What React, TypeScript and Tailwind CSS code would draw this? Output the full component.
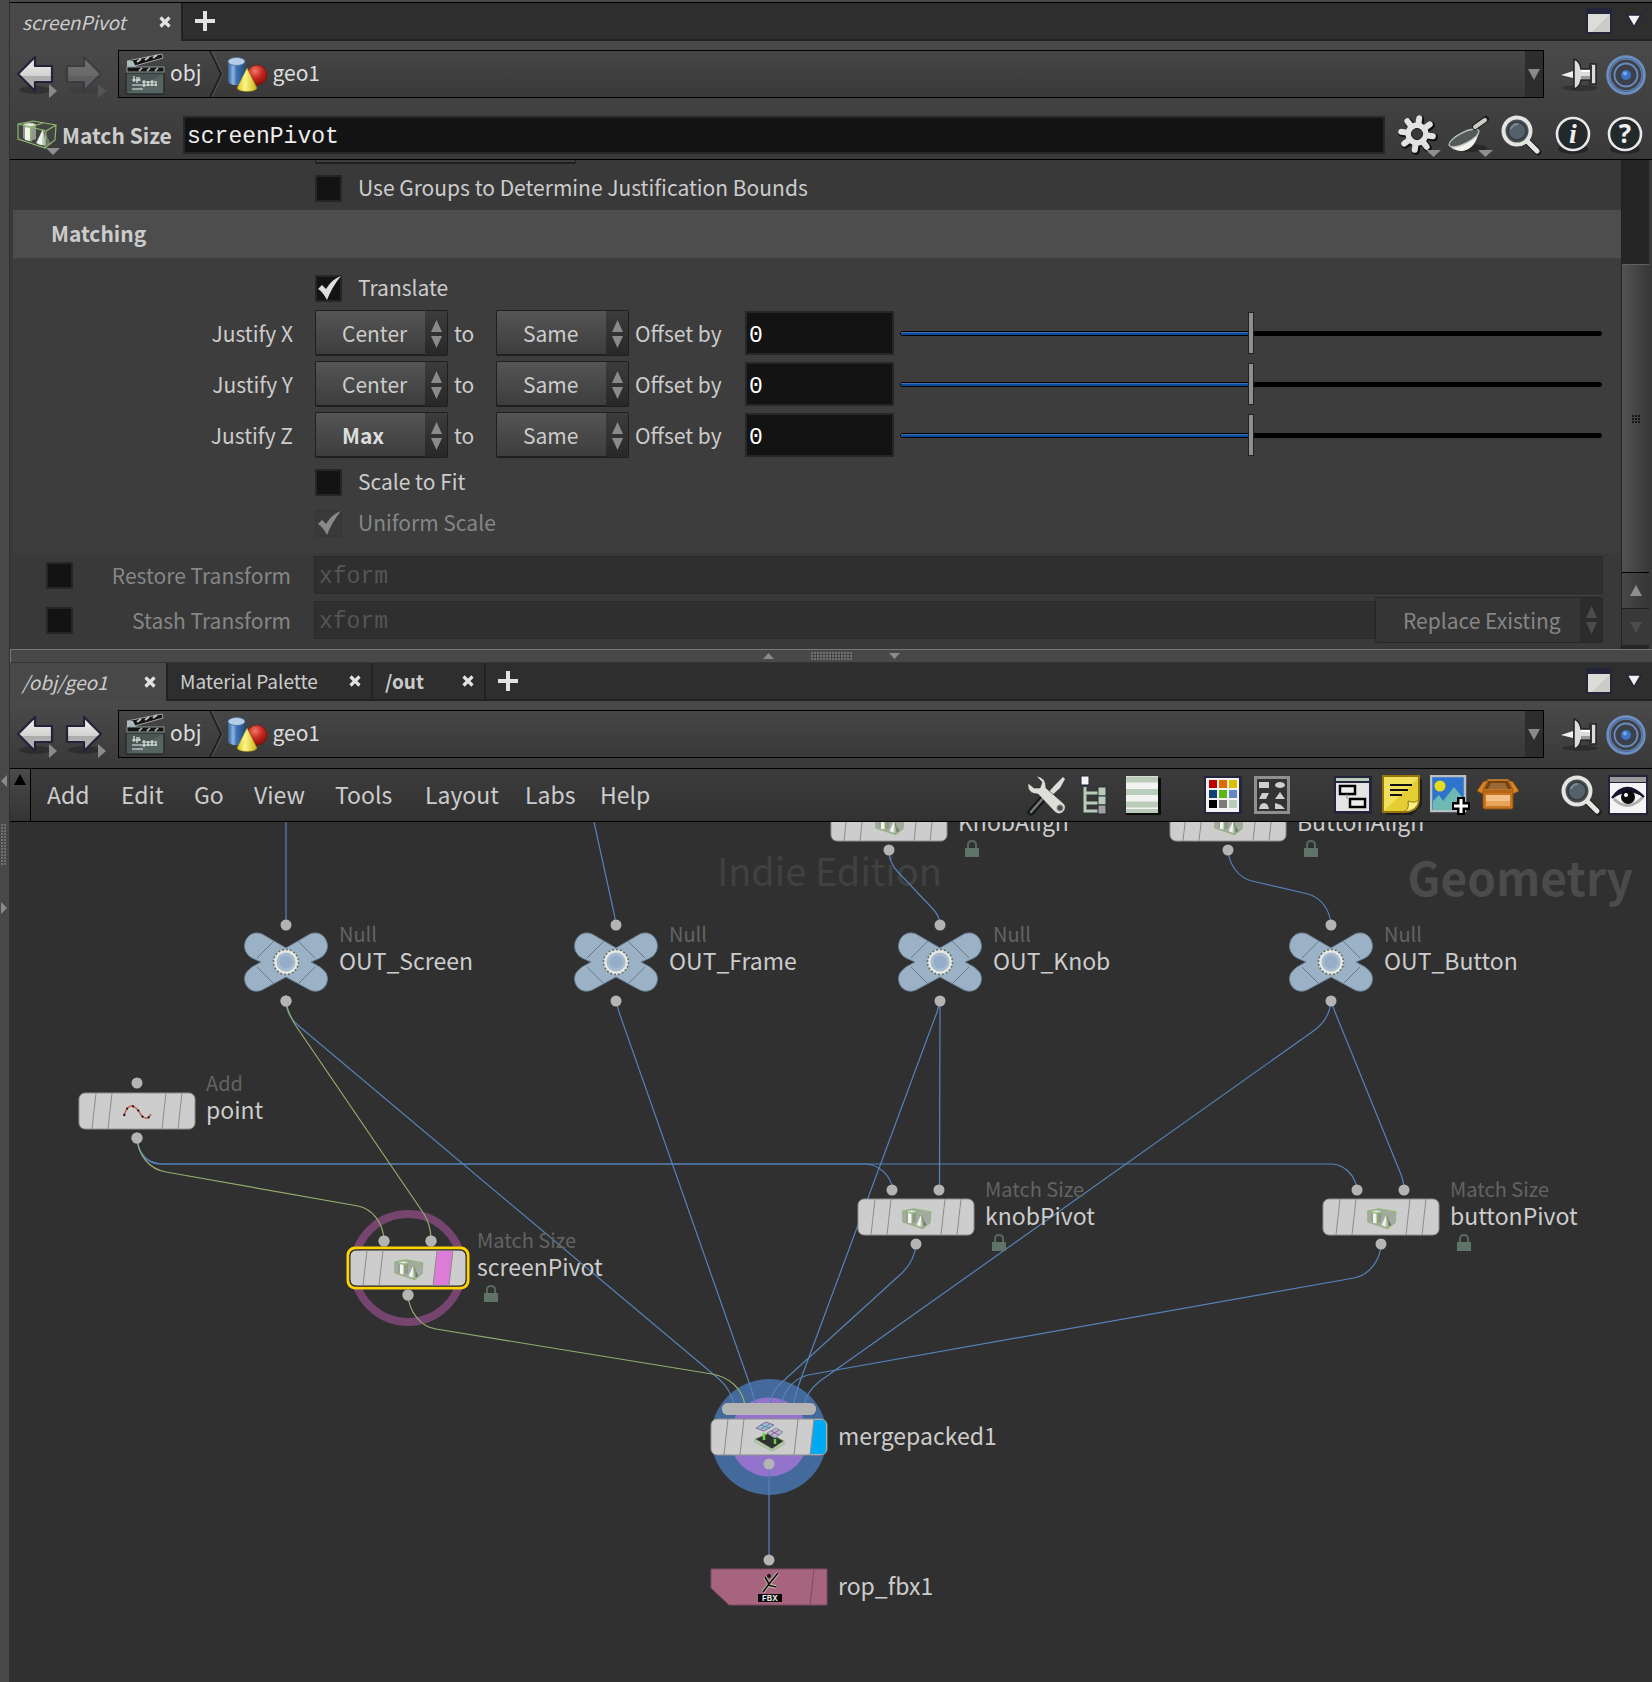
import { useState, type ReactNode } from 'react';

type Point = { x: number; y: number };

function ArrowIcon({ flip = false, dim = false }: { flip?: boolean; dim?: boolean }) {
  return (
    <svg width="42" height="46" viewBox="0 0 42 46" className={dim ? 'opacity-25' : ''}>
      <defs>
        <linearGradient id="arrowFill" x1="0" y1="0" x2="0" y2="1">
          <stop offset="0" stopColor="#f4f4f4" />
          <stop offset="0.55" stopColor="#d2d2d0" />
          <stop offset="0.56" stopColor="#acacac" />
          <stop offset="1" stopColor="#b8b8b8" />
        </linearGradient>
      </defs>
      <ellipse cx="19" cy="37" rx="16" ry="4" fill="#000" opacity="0.25" />
      <path
        d={flip ? 'M36 21 L19 4 V13 H2 V29 H19 V38 Z' : 'M2 21 L19 4 V13 H36 V29 H19 V38 Z'}
        fill="url(#arrowFill)"
        stroke="#22223a"
        strokeWidth="2.200"
        strokeLinejoin="round"
      />
      <path d="M33 31 L41 38 L33 45 Z" fill="#8a8a8a" />
    </svg>
  );
}

function ClapperIcon() {
  return (
    <svg width="40" height="42" viewBox="0 0 40 42">
      <rect x="1" y="20" width="38" height="21" rx="1" fill="#4a5654" stroke="#1a2020" />
      <path d="M3 40 L36 22 H38 V40 Z" fill="#5f6f6a" opacity="0.6" />
      <path d="M2 8 L37 1 L38 5 L6 14 Z" fill="#151515" stroke="#a5a5a5" />
      <path d="M12 9 L16 6 M20 7 L24 4 M28 5 L32 2" stroke="#ccc" strokeWidth="1.600" />
      <path d="M2 8 L8 8 L13 18 H2 Z" fill="#aebcc2" />
      <rect x="2" y="14" width="37" height="5" fill="#151515" stroke="#8d9a97" />
      <path d="M14 18 L17 15 M22 18 L25 15 M30 18 L33 15" stroke="#bbb" strokeWidth="1.600" />
      <path d="M7 27 H16 M9 23 V29 M12 24 V30 M14 24 V28 M7 32 H32 M17 29 H30 M19 27 V34 M23 28 V33 M27 27 V33 M31 28 V33 M7 36 H18" stroke="#e6ecea" strokeWidth="1.2" fill="none" />
    </svg>
  );
}

function GeoIcon() {
  return (
    <svg width="41" height="35" viewBox="0 0 41 35">
      <defs>
        <linearGradient id="cyl" x1="0" x2="1">
          <stop offset="0" stopColor="#2e5f9a" />
          <stop offset="0.3" stopColor="#8fb5e2" />
          <stop offset="0.5" stopColor="#3f74b4" />
          <stop offset="1" stopColor="#244c80" />
        </linearGradient>
        <radialGradient id="ball" cx="0.4" cy="0.3" r="0.7">
          <stop offset="0" stopColor="#ef7a6a" />
          <stop offset="0.5" stopColor="#c92a22" />
          <stop offset="1" stopColor="#8c100c" />
        </radialGradient>
        <linearGradient id="cone" x1="0" x2="1">
          <stop offset="0" stopColor="#d8c21c" />
          <stop offset="0.4" stopColor="#fdf58a" />
          <stop offset="1" stopColor="#c9b012" />
        </linearGradient>
      </defs>
      <path d="M1 4 V24 A8 4 0 0 0 18 24 V4 Z" fill="url(#cyl)" />
      <ellipse cx="9.500" cy="4.500" rx="8.500" ry="4" fill="#b6cde6" stroke="#45719f" strokeWidth="0.8" />
      <circle cx="30" cy="18" r="10" fill="url(#ball)" stroke="#6e1210" strokeWidth="0.6" />
      <path d="M20 11 L30 31 A10 3.500 0 0 1 10 31 Z" fill="url(#cone)" stroke="#8d7d14" strokeWidth="0.5" />
    </svg>
  );
}

function MatchSizeArt() {
  return (
    <g>
      <path d="M1 4 L16 1 L39 6 L38 20 L28 28 L1 19 Z" fill="#4c5548" opacity="0.3" />
      <path d="M6 5 V18 Q12 23 19 19 V5 Z" fill="#8f998a" />
      <path d="M8 6 V20 L13 21 V6 Z" fill="#f0f4ec" />
      <ellipse cx="12.500" cy="5" rx="6.500" ry="2.200" fill="#dfe6da" stroke="#7b8676" strokeWidth="0.600" />
      <path d="M26 9 L33 23 Q27 28 19 23 Z" fill="#bcc5b7" />
      <path d="M26 9 L25 25 L20 23 Z" fill="#f1f4ee" />
      <path d="M26 9 L33 23 L29 25 Z" fill="#6d7669" />
      <path d="M1 4 L16 1 L39 5 L38 20 L28 28 L1 19 Z M1 4 L14 7 L29 11 L39 5 M29 11 L28 28 M14 7 V22 M14 7 L26 3" fill="none" stroke="#8db56d" strokeWidth="1.200" />
    </g>
  );
}

function PinIcon() {
  return (
    <svg width="40" height="34" viewBox="0 0 40 34">
      <ellipse cx="20" cy="30" rx="18" ry="3" fill="#000" opacity="0.25" />
      <path d="M1 17 L13 13 V20 Z" fill="#f0f0f0" />
      <path d="M14 1 Q20 3 21 11 H30 V6 H36 V26 H30 V22 H21 Q20 29 14 31 Z" fill="#dcdcdc" stroke="#222" strokeWidth="1.500" />
      <path d="M21 12 H30 V14 H21 Z" fill="#fff" />
      <path d="M31 7 V25" stroke="#333" strokeWidth="2" />
      <path d="M21 18 H30 V21 H21 Z" fill="#999" />
    </svg>
  );
}

function TargetIcon() {
  return (
    <svg width="42" height="42" viewBox="0 0 42 42">
      <circle cx="21" cy="21" r="17.500" fill="#3f4145" stroke="#6d8fc0" strokeWidth="4.500" />
      <circle cx="21" cy="21" r="16.500" fill="none" stroke="#4a6898" strokeWidth="1.200" />
      <circle cx="21" cy="21" r="11.500" fill="#3c4048" stroke="#6a8cbe" strokeWidth="1.800" />
      <circle cx="21" cy="21" r="5" fill="#3b74c4" />
      <circle cx="20" cy="19.500" r="2" fill="#7ba8e6" />
    </svg>
  );
}

function GearIcon() {
  return (
    <svg width="46" height="44" viewBox="0 0 46 44">
      <g transform="translate(21 21)">
        {[8, 53, 98, 143, 188, 233, 278, 323].map((a) => (
          <path key={a} d="M0 -8 V-16" stroke="#101010" strokeWidth="8" strokeLinecap="round" transform={`translate(1 1) rotate(${a})`} />
        ))}
        {[8, 53, 98, 143, 188, 233, 278, 323].map((a) => (
          <path key={a} d="M0 -8 V-16" stroke="#e2e2e0" strokeWidth="6" strokeLinecap="round" transform={`rotate(${a})`} />
        ))}
        <circle r="8.500" fill="none" stroke="#e2e2e0" strokeWidth="6" />
        <circle r="5.500" fill="#3a3a3a" stroke="#181818" />
      </g>
      <path d="M30 37 H45 L37.500 44 Z" fill="#8f8f8f" />
    </svg>
  );
}

function PanIcon() {
  return (
    <svg width="46" height="44" viewBox="0 0 46 44">
      <ellipse cx="22" cy="35" rx="17" ry="4" fill="#000" opacity="0.3" />
      <path d="M1 31 Q3 38 14 38 Q28 36 31 18 Z" fill="#cfd3ce" />
      <path d="M5 34 Q18 33 29 22 Q26 36 14 38 Q7 37 5 34 Z" fill="#f3f3ef" />
      <ellipse cx="16" cy="25" rx="16.500" ry="5.500" transform="rotate(-27 16 25)" fill="#54595a" stroke="#b9c4bf" strokeWidth="1.300" />
      <path d="M27 14 L38 6" stroke="#1c1c1c" strokeWidth="6" strokeLinecap="round" />
      <path d="M27 14 L37 7" stroke="#cdcdc6" strokeWidth="4" strokeLinecap="round" />
      <path d="M30 37 H45 L37.500 44 Z" fill="#8f8f8f" />
    </svg>
  );
}

function SearchIcon() {
  return (
    <svg width="42" height="42" viewBox="0 0 42 42">
      <path d="M27 27 L38 38" stroke="#1c1c1c" strokeWidth="7" strokeLinecap="round" />
      <path d="M26 26 L37 37" stroke="#e6e6e2" strokeWidth="5" strokeLinecap="round" />
      <circle cx="17" cy="17" r="13.500" fill="#4a5054" stroke="#e4e4e0" strokeWidth="4" />
      <circle cx="17" cy="17" r="9" fill="#55616a" stroke="#333a3f" strokeWidth="1.500" />
      <path d="M11 15 Q13 10 18 10" stroke="#7c8b96" strokeWidth="2" fill="none" />
    </svg>
  );
}

function BadgeIcon({ glyph, italic = false }: { glyph: string; italic?: boolean }) {
  return (
    <svg width="38" height="40" viewBox="0 0 38 40">
      <ellipse cx="19" cy="34" rx="15" ry="5" fill="#000" opacity="0.35" />
      <circle cx="19" cy="19" r="16" fill="#23292b" stroke="#e8e8e8" strokeWidth="2.600" />
      <text
        x="19"
        y="28"
        textAnchor="middle"
        fill="#efefef"
        className={italic ? 'font-["Liberation_Serif",serif] text-[28px] font-bold italic' : 'font-["Open_Sans",sans-serif] text-[26px] font-bold'}
      >
        {glyph}
      </text>
    </svg>
  );
}

function WindowIcon() {
  return (
    <svg width="26" height="26" viewBox="0 0 26 26">
      <rect width="26" height="26" fill="#24243a" />
      <rect x="2" y="6" width="22" height="18" fill="#dcdcd8" />
      <path d="M24 6 V24 H6 Z" fill="#cbcbc8" />
    </svg>
  );
}

function MenuTriangle() {
  return (
    <svg width="18" height="16" viewBox="0 0 18 16">
      <path d="M2 2 H16 L9 14 Z" fill="#f1f1f1" stroke="#24243a" strokeWidth="1.500" />
    </svg>
  );
}

function Tab({ title, active = false, className = '' }: { title: string; active?: boolean; className?: string }) {
  return (
    <div className={`flex h-full items-center justify-between pl-3 pr-[10px] text-[19px] ${active ? 'bg-[#484848]' : 'border-b-2 border-l-2 border-[#222222] bg-[#2e2e2e]'} ${className}`}>
      <button type="button" className="whitespace-nowrap leading-[28px]">
        {title}
      </button>
      <button type="button" aria-label={`Close ${title}`}>
        <svg width="12" height="12" viewBox="0 0 12 12">
          <path d="M1.500 1.500 L10.500 10.500 M10.500 1.500 L1.500 10.500" stroke="#e2e2e2" strokeWidth="3.200" />
        </svg>
      </button>
    </div>
  );
}

function TabBar({ children }: { children: ReactNode }) {
  return (
    <div className="flex h-[38px] bg-[#2e2e2e] text-[#cccccc]">
      {children}
      <div className="flex flex-1 items-center border-b-2 border-l-2 border-[#222222] pl-3 pr-[9px]">
        <button type="button" aria-label="New tab" className="mr-auto">
          <svg width="20" height="20" viewBox="0 0 20 20">
            <path d="M10 0 V20 M0 10 H20" stroke="#e2e2e2" strokeWidth="4" />
          </svg>
        </button>
        <button type="button" aria-label="Maximize pane" className="mr-[13px]">
          <WindowIcon />
        </button>
        <button type="button" aria-label="Pane menu">
          <MenuTriangle />
        </button>
      </div>
    </div>
  );
}

function PathBar({ forward = false }: { forward?: boolean }) {
  return (
    <div className="flex h-12 items-center">
      <div className="ml-[6px] flex w-[102px] gap-[7px] pt-[3px]">
        <button type="button" aria-label="Back">
          <ArrowIcon />
        </button>
        <button type="button" aria-label="Forward">
          <ArrowIcon flip dim={!forward} />
        </button>
      </div>
      <nav className="flex h-full flex-1 items-center border border-black bg-gradient-to-b from-[#464646] to-[#393939] pl-[6px] text-[21px] text-[#dddddd]">
        <ClapperIcon />
        <a href="#obj" className="ml-[5px] pb-1 leading-[28px]">obj</a>
        <svg width="14" height="46" viewBox="0 0 14 46" className="ml-2">
          <path d="M1 0 L12 23 L1 46" fill="none" stroke="#1c1c1c" strokeWidth="1.500" />
          <path d="M3 0 L14 23 L3 46" fill="none" stroke="#555" />
        </svg>
        <span className="ml-[4px]">
          <GeoIcon />
        </span>
        <a href="#geo1" className="ml-[4px] pb-1 leading-[28px]">geo1</a>
        <button type="button" aria-label="Path history" className="ml-auto flex h-full w-[18px] items-center justify-center bg-[#2d2d2d]">
          <svg width="12" height="11" viewBox="0 0 12 11">
            <path d="M0 0 H12 L6 11 Z" fill="#8a8a8a" />
          </svg>
        </button>
      </nav>
      <button type="button" aria-label="Pin" className="ml-4 pt-[2px]">
        <PinIcon />
      </button>
      <button type="button" aria-label="Link" className="ml-[5px] mr-[5px] pt-[2px]">
        <TargetIcon />
      </button>
    </div>
  );
}

function Check({ id, label, checked = false, disabled = false }: { id: string; label?: string; checked?: boolean; disabled?: boolean }) {
  const [on, setOn] = useState(checked);
  return (
    <span className="flex h-[27px] items-center gap-4">
      <span className="relative block size-[27px]">
        <input
          id={id}
          type="checkbox"
          checked={on}
          disabled={disabled}
          onChange={(e) => setOn(e.target.checked)}
          className="block size-[27px] appearance-none border-2 border-[#262626] bg-[#131313] disabled:border-[#373737] disabled:bg-[#3a3a3a]"
        />
        {on && (
          <svg viewBox="0 0 27 27" className="pointer-events-none absolute inset-0">
            <path d="M3 14 L7 10 L11 14 Q17 4 26 1 Q17 12 12 25 Q8 17 3 14 Z" fill={disabled ? '#8a8a8a' : '#dddddd'} />
          </svg>
        )}
      </span>
      {label && (
        <label htmlFor={id} className={`pb-1 leading-[28px] ${disabled ? 'text-[#868686]' : ''}`}>
          {label}
        </label>
      )}
    </span>
  );
}

function Spinner({ fill }: { fill: string }) {
  return (
    <svg width="11" height="28" viewBox="0 0 11 28">
      <path d="M0 12 L5.500 0 L11 12 Z M0 16 L5.500 28 L11 16 Z" fill={fill} />
    </svg>
  );
}

function Select({ name, options, bold = false }: { name: string; options: string[]; bold?: boolean }) {
  return (
    <span className="relative block h-[46px] w-[133px]">
      <select
        aria-label={name}
        className={`block size-full appearance-none rounded-[2px] border border-b-2 border-[#1f1f1f] bg-gradient-to-b from-[#555555] to-[#3d3d3d] pl-[26px] leading-[28px] ${bold ? 'font-bold text-[#dddddd]' : ''}`}
      >
        {options.map((o) => (
          <option key={o}>{o}</option>
        ))}
      </select>
      <span className="pointer-events-none absolute inset-y-px right-px flex w-[22px] items-center justify-center bg-gradient-to-b from-[#3c3c3c] to-[#282828] pt-[2px]">
        <Spinner fill="#8a8a8a" />
      </span>
    </span>
  );
}

function JustifyRow({ axis, from }: { axis: string; from: string }) {
  const [offset, setOffset] = useState(0);
  return (
    <div className="flex h-[46px] items-center pr-[19px]">
      <span className="w-[280px] text-right">Justify {axis}</span>
      <span className="ml-[22px]">
        <Select name={`Justify ${axis}`} options={from === 'Max' ? ['Max', 'Min', 'Center'] : ['Center', 'Min', 'Max']} bold={from === 'Max'} />
      </span>
      <span className="w-12 pl-[6px]">to</span>
      <Select name={`Justify ${axis} to`} options={['Same', 'Min', 'Center', 'Max']} />
      <label htmlFor={`offset-${axis}`} className="w-[116px] whitespace-nowrap pl-[6px]">
        Offset by
      </label>
      <input
        id={`offset-${axis}`}
        value={offset}
        onChange={(e) => setOffset(Number(e.target.value) || 0)}
        className="h-11 w-[149px] border-2 border-[#272727] bg-[#131313] pl-[2px] pt-[5px] font-[Liberation_Mono,monospace] text-[23px] leading-[28px] text-white"
      />
      <span className="relative ml-[6px] flex h-[42px] flex-1 items-center">
        <span className="h-[5px] flex-1 rounded-full border border-black bg-black">
          <span className="block h-[3px] border-t border-[#3f6fb0] bg-[#0a4a9c]" style={{ width: `${(offset + 1) * 50}%` }} />
        </span>
        <input
          type="range"
          min={-1}
          max={1}
          step={0.01}
          value={offset}
          aria-label={`Offset ${axis} slider`}
          onChange={(e) => setOffset(Number(e.target.value))}
          className="absolute inset-0 size-full appearance-none bg-transparent [&::-webkit-slider-thumb]:h-[42px] [&::-webkit-slider-thumb]:w-[6px] [&::-webkit-slider-thumb]:appearance-none [&::-webkit-slider-thumb]:border [&::-webkit-slider-thumb]:border-[#222222] [&::-webkit-slider-thumb]:bg-[#8f8f8f]"
        />
      </span>
    </div>
  );
}

function Scrollbar() {
  return (
    <div className="flex w-[28px] flex-col border-l border-[#222222] bg-[#252525] pb-1">
      <div className="h-[104px]" />
      <div className="flex flex-1 items-center justify-center border-y border-[#5f5f5f] border-b-black bg-gradient-to-r from-[#535353] to-[#383838]">
        <div className="grid grid-cols-3 gap-px">
          {Array.from({ length: 9 }, (_, i) => (
            <span key={i} className="size-[2px] bg-[#151515]" />
          ))}
        </div>
      </div>
      <button type="button" aria-label="Scroll up" className="flex h-9 items-center justify-center border-b border-[#202020] bg-gradient-to-r from-[#484848] to-[#353535]">
        <svg width="12" height="11" viewBox="0 0 12 11">
          <path d="M0 11 H12 L6 0 Z" fill="#8f8f8f" />
        </svg>
      </button>
      <button type="button" aria-label="Scroll down" className="flex h-9 items-center justify-center bg-[#393939]">
        <svg width="12" height="11" viewBox="0 0 12 11">
          <path d="M0 0 H12 L6 11 Z" fill="#4c4c4c" />
        </svg>
      </button>
    </div>
  );
}

function ParameterPane() {
  return (
    <section>
      <TabBar>
        <Tab title="screenPivot" active className="w-[171px] italic" />
      </TabBar>
      <header className="border-b border-black bg-gradient-to-b from-[#4a4a4a] to-[#393939] pb-[5px] pt-[9px]">
        <PathBar />
        <div className="mt-[18px] flex h-[38px] items-center">
          <button type="button" aria-label="Operator menu" className="ml-[7px] pt-[6px]">
            <svg width="44" height="36" viewBox="0 0 44 36">
              <MatchSizeArt />
              <path d="M29 28 H43 L36 35 Z" fill="#8f8f8f" />
            </svg>
          </button>
          <label htmlFor="opname" className="w-[122px] whitespace-nowrap pl-[1px] text-[21px] font-bold leading-[28px] text-[#cccccc]">
            Match Size
          </label>
          <input
            id="opname"
            defaultValue="screenPivot"
            className="h-full min-w-0 flex-1 border-2 border-[#272727] bg-[#131313] pl-[2px] pt-1 font-[Liberation_Mono,monospace] text-[23px] leading-[28px] text-[#eeeeee]"
          />
          <div className="ml-[11px] mr-2 flex items-center gap-[6px]">
            <button type="button" aria-label="Settings"><GearIcon /></button>
            <button type="button" aria-label="Presets"><PanIcon /></button>
            <button type="button" aria-label="Search parameters"><SearchIcon /></button>
            <button type="button" aria-label="Info" className="ml-[6px]"><BadgeIcon glyph="i" italic /></button>
            <button type="button" aria-label="Help" className="ml-2"><BadgeIcon glyph="?" /></button>
          </div>
        </div>
      </header>
      <div className="flex bg-[#393939] px-[3px] text-[21px] leading-[28px] text-[#cccccc]">
        <div className="min-w-0 flex-1 pb-[6px]">
          <div className="pb-2 pl-[302px]">
            <div className="mb-[11px] h-1 w-[261px] rounded-b-[2px] border border-t-0 border-b-2 border-[#1f1f1f] bg-[#3d3d3d]" />
            <Check id="groups" label="Use Groups to Determine Justification Bounds" />
          </div>
          <h2 className="h-12 bg-[#4d4d4d] pl-[38px] font-bold leading-[46px]">Matching</h2>
          <div className="bg-[#3d3d3d] pb-4 pt-[17px]">
            <div className="pl-[302px]">
              <Check id="translate" label="Translate" checked />
            </div>
            <div className="mt-2 flex flex-col gap-[5px]">
              <JustifyRow axis="X" from="Center" />
              <JustifyRow axis="Y" from="Center" />
              <JustifyRow axis="Z" from="Max" />
            </div>
            <div className="mt-[11px] flex flex-col gap-[14px] pl-[302px]">
              <Check id="scale" label="Scale to Fit" />
              <Check id="uniform" label="Uniform Scale" checked disabled />
            </div>
          </div>
          <div className="mt-[3px] flex h-[38px] items-center pl-[33px] pr-[18px] text-[#868686]">
            <Check id="restore" />
            <label htmlFor="restore" className="ml-auto w-[218px] text-right">Restore Transform</label>
            <input
              aria-label="Restore attribute"
              disabled
              defaultValue="xform"
              className="ml-[23px] h-[38px] min-w-0 flex-1 border border-[#2a2a2a] bg-[#2f2f2f] pl-1 pt-1 font-[Liberation_Mono,monospace] text-[23px] text-[#555555]"
            />
          </div>
          <div className="mt-[3px] flex h-[46px] items-center pl-[33px] pr-[18px] text-[#868686]">
            <Check id="stash" />
            <label htmlFor="stash" className="ml-auto w-[218px] text-right">Stash Transform</label>
            <input
              aria-label="Stash attribute"
              disabled
              defaultValue="xform"
              className="ml-[23px] h-[38px] min-w-0 flex-1 border border-[#2a2a2a] bg-[#2f2f2f] pl-1 pt-1 font-[Liberation_Mono,monospace] text-[23px] text-[#555555]"
            />
            <span className="relative block h-[46px] w-[228px]">
              <select disabled aria-label="Stash mode" className="block size-full appearance-none rounded-[2px] border border-[#272727] bg-[#353535] pl-[27px] opacity-100">
                <option>Replace Existing</option>
              </select>
              <span className="absolute inset-y-px right-px flex w-[22px] items-center justify-center bg-[#2c2c2c]">
                <Spinner fill="#4c4c4c" />
              </span>
            </span>
          </div>
        </div>
        <Scrollbar />
      </div>
    </section>
  );
}

function Splitter() {
  return (
    <div className="flex h-[14px] items-center justify-center gap-[37px] border border-b-[#333333] border-l-[#777777] border-r-0 border-t-[#777777] bg-[#484848]">
      <svg width="11" height="6" viewBox="0 0 11 6">
        <path d="M0 6 H11 L5.500 0 Z" fill="#8a8a8a" />
      </svg>
      <div className="grid grid-flow-col grid-rows-3 gap-px">
        {Array.from({ length: 42 }, (_, i) => (
          <span key={i} className="size-[2px] bg-[#707070]" />
        ))}
      </div>
      <svg width="11" height="6" viewBox="0 0 11 6">
        <path d="M0 0 H11 L5.500 6 Z" fill="#8a8a8a" />
      </svg>
    </div>
  );
}

function ToolsIcon() {
  return (
    <svg width="40" height="42" viewBox="0 0 40 42">
      <path d="M36 3 L38 5 L33 14 L22 24 L19 21 L28 11 Z" fill="#deded8" />
      <path d="M20 20 L4 38" stroke="#15181a" strokeWidth="7" strokeLinecap="round" />
      <path d="M19 21 L4 38" stroke="#7a7d80" strokeWidth="2.500" strokeLinecap="round" />
      <path d="M9 2 L15 8 L13 14 L7 14 L1 9 Q0 20 11 20 L28 38 Q33 42 37 37 Q40 32 36 29 L19 14 Q19 3 9 2 Z" fill="#deded8" stroke="#2a2a2a" strokeWidth="0.600" />
      <circle cx="33" cy="34" r="3.200" fill="#4a4a4a" stroke="#aaa" />
    </svg>
  );
}

function TreeIcon() {
  return (
    <svg width="28" height="40" viewBox="0 0 28 40">
      <path d="M5 12 V36 H18 M5 18 H18 M5 28 H18" fill="none" stroke="#b9ccb9" strokeWidth="3" />
      <rect x="1" y="1" width="8" height="9" fill="#f4f4f4" stroke="#24243a" />
      <rect x="18" y="12" width="8" height="9" fill="#b9ccb9" stroke="#24343a" />
      <rect x="18" y="21" width="8" height="9" fill="#b9ccb9" stroke="#24343a" />
      <rect x="18" y="30" width="8" height="9" fill="#a0a0a0" stroke="#24243a" />
    </svg>
  );
}

function ListIcon() {
  return (
    <svg width="36" height="40" viewBox="0 0 36 40">
      <rect x="3" y="3" width="33" height="37" fill="#0c0c0c" />
      <rect x="1" y="1" width="32" height="37" fill="#f2f2f2" />
      <path d="M1 4.500 H33 M1 17 H33 M1 29.500 H33 M1 37 H33" stroke="#b9ccb9" strokeWidth="6" />
      <rect x="1" y="38" width="32" height="2" fill="#0c0c0c" />
    </svg>
  );
}

const SWATCHES = ['#c00000', '#e06a00', '#dcc000', '#0d4478', '#5fb810', '#6488c4', '#000000', '#7c7c7c', '#b9ccb9'];

function PaletteIcon() {
  return (
    <svg width="38" height="38" viewBox="0 0 38 38">
      <rect width="38" height="38" fill="#24243a" />
      <rect x="2" y="2" width="33" height="34" fill="#f2f2f2" />
      {SWATCHES.map((c, i) => (
        <rect key={c} x={5 + (i % 3) * 10} y={4 + Math.floor(i / 3) * 10} width="8" height="8" fill={c} />
      ))}
    </svg>
  );
}

function ShapesIcon() {
  return (
    <svg width="36" height="38" viewBox="0 0 36 38">
      <rect x="1.500" y="1.500" width="33" height="35" fill="#333333" stroke="#8f8f8f" strokeWidth="3" />
      <g fill="#cfcfcf">
        <rect x="5" y="6" width="10" height="6" />
        <ellipse cx="26" cy="9" rx="5" ry="3" />
        <path d="M8 17 H15 L12 23 H5 Z M26 16 L31 23 H21 Z M5 33 Q6 27 10 27 Q14 27 15 33 Z M21 27 L27 29 L31 33 H21 Z" />
      </g>
    </svg>
  );
}

function NetBoxIcon() {
  return (
    <svg width="38" height="38" viewBox="0 0 38 38">
      <rect width="38" height="38" fill="#24243a" />
      <rect x="2" y="2" width="33" height="3" fill="#b9ccb9" />
      <rect x="2" y="7" width="33" height="28" fill="#e4e4e4" />
      <rect x="6" y="10" width="15" height="8" fill="#eeeeee" stroke="#000" strokeWidth="2.500" />
      <rect x="16" y="23" width="15" height="8" fill="#eeeeee" stroke="#000" strokeWidth="2.500" />
      <path d="M13 18 V23" stroke="#888" />
    </svg>
  );
}

function NoteIcon() {
  return (
    <svg width="40" height="40" viewBox="0 0 40 40">
      <path d="M4 4 H40 V30 L30 40 H4 Z" fill="#1d1d1d" />
      <path d="M1 1 H37 V25 Q36 37 22 37 H1 Z" fill="#f0e05c" stroke="#96760a" strokeWidth="2" />
      <path d="M2 36 L36 3 V25 Q33 36 22 36 Z" fill="#dcc218" opacity="0.6" />
      <path d="M37 24 Q34 29 26 26 Q28 36 20 37 Q36 37 37 24 Z" fill="#f8ef88" stroke="#96760a" />
      <path d="M8 10 H30 M8 15 H26 M8 20 H20" stroke="#111" strokeWidth="2.200" />
    </svg>
  );
}

function ImageIcon() {
  return (
    <svg width="42" height="40" viewBox="0 0 42 40">
      <rect x="1" y="1" width="34" height="35" fill="#2f74cc" stroke="#b9c0c4" strokeWidth="2.500" />
      <circle cx="10" cy="11" r="5.500" fill="#e4dc18" />
      <path d="M3 35 V26 L9 20 L13 26 L24 12 L33 23 V35 Z" fill="#6fb9b4" />
      <path d="M31 22 V40 M22 31 H40" stroke="#000" strokeWidth="8" />
      <path d="M31 24 V38 M24 31 H38" stroke="#fff" strokeWidth="3" />
    </svg>
  );
}

function BoxIcon() {
  return (
    <svg width="42" height="34" viewBox="0 0 42 34">
      <path d="M6 13 H36 V29 Q36 31 34 31 H8 Q6 31 6 29 Z" fill="#c87420" stroke="#8c4c0c" />
      <path d="M9 17 H33 V28 H9 Z" fill="#f3c08a" />
      <path d="M9 23 H33 V28 H9 Z" fill="#e8a458" />
      <path d="M11 2 H31 L36 12 H6 Z" fill="#77420f" stroke="#d58a34" strokeWidth="1.500" />
      <path d="M14 5 H28 L31 11 H11 Z" fill="#9a6a34" />
      <path d="M11 2 L6 4 L0 13 L6 16 L6 12 Z M31 2 L36 4 L42 13 L36 16 L36 12 Z" fill="#d8832a" stroke="#8c4c0c" strokeWidth="0.800" />
      <path d="M6 12 H36 V15 H6 Z" fill="#b5651a" />
    </svg>
  );
}

function EyeIcon() {
  return (
    <svg width="40" height="40" viewBox="0 0 40 40">
      <rect width="40" height="40" fill="#24243a" />
      <rect x="2" y="2" width="36" height="5" fill="#9a9a9a" />
      <rect x="2" y="8" width="36" height="30" fill="#f4f4f4" />
      <path d="M6 24 Q20 38 35 22" fill="none" stroke="#b0b0b0" strokeWidth="3" />
      <path d="M4 23 Q18 3 36 22 Q21 10 4 23 Z" fill="#14142a" stroke="#14142a" strokeWidth="2" />
      <circle cx="20" cy="22" r="7" fill="#0c0c10" />
      <circle cx="18" cy="20" r="2" fill="#fff" />
    </svg>
  );
}

const MENUS = [
  { name: 'Add', className: 'ml-[16px] w-[74px]' },
  { name: 'Edit', className: 'w-[73px]' },
  { name: 'Go', className: 'w-[60px]' },
  { name: 'View', className: 'w-[81px]' },
  { name: 'Tools', className: 'w-[90px]' },
  { name: 'Layout', className: 'w-[100px]' },
  { name: 'Labs', className: 'w-[75px]' },
  { name: 'Help', className: 'w-[60px]' },
];

function MenuBar() {
  return (
    <div className="flex h-[53px] items-center border-b border-black bg-gradient-to-b from-[#3c3c3c] to-[#323232]">
      <button type="button" aria-label="Collapse menu" className="flex h-full w-[21px] justify-center border-r border-black bg-gradient-to-b from-[#4a4a4a] to-[#343434] pt-[5px]">
        <svg width="12" height="11" viewBox="0 0 12 11">
          <path d="M0 11 H12 L6 0 Z" fill="#000" />
        </svg>
      </button>
      <div className="flex flex-1 pb-[3px] text-[23px] leading-[32px] text-[#cccccc]">
        {MENUS.map((m) => (
          <button key={m.name} type="button" className={`text-left ${m.className}`}>
            {m.name}
          </button>
        ))}
      </div>
      <div className="flex items-center pr-[4px]">
        <button type="button" aria-label="Tools"><ToolsIcon /></button>
        <button type="button" aria-label="Tree view" className="ml-[13px]"><TreeIcon /></button>
        <button type="button" aria-label="List view" className="ml-[17px]"><ListIcon /></button>
        <button type="button" aria-label="Colors" className="ml-[43px]"><PaletteIcon /></button>
        <button type="button" aria-label="Shapes" className="ml-3"><ShapesIcon /></button>
        <button type="button" aria-label="Network box" className="ml-[44px]"><NetBoxIcon /></button>
        <button type="button" aria-label="Sticky note" className="ml-[10px]"><NoteIcon /></button>
        <button type="button" aria-label="Background image" className="ml-2"><ImageIcon /></button>
        <button type="button" aria-label="Subnet box" className="ml-[5px]"><BoxIcon /></button>
        <button type="button" aria-label="Find node" className="ml-[41px]"><SearchIcon /></button>
        <button type="button" aria-label="Display options" className="ml-[6px]"><EyeIcon /></button>
      </div>
    </div>
  );
}

// Node positions are in network space; the view is panned to this corner.
const VIEW: Point = { x: 10, y: 822 };

type NodeKind = 'null' | 'add' | 'match' | 'merge' | 'rop';
type NetNode = Point & { name: string; type?: string; kind: NodeKind; locked?: boolean; selected?: boolean };

// x, y is the centre of the node body
const NODES: NetNode[] = [
  { name: 'KnobAlign', kind: 'match', x: 889, y: 823, locked: true },
  { name: 'ButtonAlign', kind: 'match', x: 1228, y: 823, locked: true },
  { name: 'OUT_Screen', type: 'Null', kind: 'null', x: 286, y: 962 },
  { name: 'OUT_Frame', type: 'Null', kind: 'null', x: 616, y: 962 },
  { name: 'OUT_Knob', type: 'Null', kind: 'null', x: 940, y: 962 },
  { name: 'OUT_Button', type: 'Null', kind: 'null', x: 1331, y: 962 },
  { name: 'point', type: 'Add', kind: 'add', x: 137, y: 1111 },
  { name: 'screenPivot', type: 'Match Size', kind: 'match', x: 408, y: 1268, locked: true, selected: true },
  { name: 'knobPivot', type: 'Match Size', kind: 'match', x: 916, y: 1217, locked: true },
  { name: 'buttonPivot', type: 'Match Size', kind: 'match', x: 1381, y: 1217, locked: true },
  { name: 'mergepacked1', kind: 'merge', x: 769, y: 1437 },
  { name: 'rop_fbx1', kind: 'rop', x: 769, y: 1587 },
];

const WIRES = [
  'M286 822 V925',
  'M594 822 L614 913 L616 925',
  'M889 850 C889 861 893 867 898 872 L932 908 C937 913 940 919 940 925',
  'M1228 850 C1229 865 1239 878 1252 881 L1308 894 C1321 898 1330 909 1331 925',
  'M286 1001 C286 1012 291 1020 300 1027 L719 1379 C727 1386 732 1395 734 1405',
  'M616 1001 L619 1012 L751 1388 L756 1405',
  'M940 1001 L939.500 1190',
  'M940 1001 L937 1012 L799 1384 L793 1405',
  'M1331 1001 C1330 1014 1324 1024 1312 1032 L820 1381 C811 1388 806 1395 804 1405',
  'M1331 1001 L1335 1012 L1400 1172 C1403 1179 1404 1184 1404 1190',
  'M137 1138 C138 1152 146 1164 162 1164 H866 C880 1165 891 1176 893 1190',
  'M137 1138 C138 1152 146 1164 162 1164 H1332 C1346 1165 1356 1177 1357 1190',
  'M916 1245 C915 1256 909 1266 902 1273 L780 1384 C774 1390 771 1397 770 1405',
  'M1381 1245 C1380 1261 1369 1275 1354 1278 L808 1375 C793 1379 784 1391 781 1405',
  'M769 1464 V1560',
];

const ACTIVE_WIRES = [
  'M286 1001 C287 1010 291 1018 296 1026 L424 1214 C429 1222 431 1231 431 1240',
  'M137 1138 C138 1155 149 1169 166 1172 L358 1206 C372 1209 383 1222 384 1240',
  'M408 1295 C409 1312 421 1327 436 1329 L712 1374 C729 1377 742 1388 745 1405',
];

function Dot({ x, y }: Point) {
  return <circle cx={x} cy={y} r="5.500" fill="#b4b4b4" />;
}

function NodeBody({ node }: { node: NetNode }) {
  const { x, y, kind, selected } = node;

  if (kind === 'null') {
    return (
      <g transform={`translate(${x} ${y})`}>
        <Dot x={0} y={-37} />
        <Dot x={0} y={39} />
        <path
          d="M0 -14 L24 -28 C36 -33 45 -20 40 -10 Q38 -6 34 -4 L25 0 L34 5 Q38 8 40 11 C45 21 36 33 24 28 L0 15 L-24 28 C-36 33 -45 21 -40 11 Q-38 8 -34 5 L-25 0 L-34 -4 Q-38 -6 -40 -10 C-45 -20 -36 -33 -24 -28 Z"
          fill="#9bb1c5"
          stroke="#6c8296"
        />
        <path d="M-12 -21 L-29 -4 M12 -21 L29 -4 M-29 5 L-12 22 M29 5 L12 22" stroke="#6a7a88" />
        <circle r="11" fill="#a6bace" stroke="#e3e9e6" strokeWidth="3" />
        <circle r="12.500" fill="none" stroke="#6c6c5c" strokeWidth="1.600" strokeDasharray="1.900 2" />
        <circle r="6.500" fill="#95adc8" />
      </g>
    );
  }

  if (kind === 'rop') {
    return (
      <g transform={`translate(${x} ${y})`}>
        <Dot x={0} y={-27} />
        <path d="M-58 -18 H58 V18 H-40 L-58 1 Z" fill="#a6647e" stroke="#7c4a60" />
        <path d="M45 -18 L41 18" stroke="#7c4a60" />
        <path d="M9 -14 L0 -3 L-6 5 M0 -3 L-4 -10 M-1 -2 L7 0" fill="none" stroke="#cfc4b4" strokeWidth="3.500" />
        <path d="M9 -14 L0 -3 L-6 5 M0 -3 L-4 -10 M-1 -2 L7 0" fill="none" stroke="#151515" strokeWidth="1.800" />
        <circle cx="0" cy="-11" r="2" fill="#151515" />
        <rect x="-11" y="7" width="24" height="8" fill="#0a0a0a" />
        <text x="1" y="14" textAnchor="middle" fill="#e8e8e8" className="font-[Inter,sans-serif] text-[8px] font-bold">FBX</text>
      </g>
    );
  }

  const merge = kind === 'merge';
  return (
    <g transform={`translate(${x} ${y})`}>
      {selected && <circle r="54" fill="none" stroke="#75456f" strokeWidth="8" />}
      {selected && <rect x="-60" y="-20" width="120" height="40" rx="7" fill="#20204a" stroke="#ffd200" strokeWidth="3" />}
      <rect x="-58" y="-18" width="116" height="36" rx={6} fill="#cdcdcd" stroke={selected ? '#202020' : '#8f8f8f'} />
      {selected && <path d="M29 -17 H45 L41 17 H25 Z" fill="#dd7bd8" />}
      {merge && <path d="M45 -17 H53 Q57 -17 57 -12 V12 Q57 17 53 17 H41 Z" fill="#00aaf2" />}
      <path d="M-41 -18 L-45 18 M-25 -18 L-29 18 M29 -18 L25 18 M45 -18 L41 18" stroke="#8c8c8c" />
      {kind === 'match' && (
        <g transform="translate(-14 -9) scale(0.740)">
          <MatchSizeArt />
        </g>
      )}
      {kind === 'add' && (
        <g>
          <path d="M-13 5 Q-10 -6 -5 -5 Q0 -4 4 4 Q10 11 14 3" fill="none" stroke="#c25a52" strokeWidth="1.500" />
          <path d="M-13 5 Q-10 -6 -5 -5 Q0 -4 4 4 Q10 11 14 3" fill="none" stroke="#1c1c1c" strokeWidth="2" strokeDasharray="2 5" />
        </g>
      )}
      {merge && (
        <g>
          <path d="M-14 2 L0 -4 L15 4 L3 12 Z" fill="#2f332e" stroke="#8fa884" />
          <path d="M-14 2 V5 L3 14 L15 7 V4" fill="none" stroke="#a3c28e" strokeWidth="1.500" />
          <path d="M-13 -9 L-3 -15 L5 -12 L-5 -6 Z" fill="#aab4d4" stroke="#7c6ea0" />
          <path d="M-9 -12 L1 -9 M-8 -8 L1 -13" stroke="#4d9aa0" />
          <path d="M-2 -4 L7 -9 L14 -5 L6 1 Z" fill="#c0b2cc" stroke="#6f9a9e" />
          <path d="M2 -6 L10 -2 M2 -2 L10 -7" stroke="#8a5a90" />
          <path d="M-5 -4 V3 M6 2 V7" stroke="#6ad048" strokeWidth="2.500" />
        </g>
      )}
      {kind === 'add' && <Dot x={0} y={-28} />}
      {kind === 'match' && <Dot x={-24} y={-27} />}
      {kind === 'match' && <Dot x={23} y={-27} />}
      {merge && <rect x="-47" y="-34" width="94" height="12" rx="6" fill="#b4b4b4" />}
      <Dot x={0} y={27} />
    </g>
  );
}

function NodeLabel({ node }: { node: NetNode }) {
  const dx = node.kind === 'null' ? 53 : 69;
  return (
    <div
      className="absolute flex flex-col whitespace-nowrap"
      style={{ left: node.x + dx - VIEW.x, top: node.y - VIEW.y - 41 }}
    >
      <span className="h-[26px] text-[20px] leading-[26px] text-[#636363]">{node.type}</span>
      <span className="text-[23px] leading-[26px] text-[#cccccc]">{node.name}</span>
      {node.locked && (
        <svg width="14" height="18" viewBox="0 0 14 18" className="ml-[7px] mt-[6px]">
          <path d="M3 9 V5 Q3 1 7 1 Q11 1 11 5 V9" fill="none" stroke="#57695d" strokeWidth="2" />
          <rect y="8" width="14" height="9" fill="#5f7368" />
        </svg>
      )}
    </div>
  );
}

function NetworkView() {
  return (
    <div className="relative min-h-[860px] flex-1 overflow-hidden bg-[#303030]">
      <div className="absolute left-[707px] top-[20px] text-[38px] leading-[56px] text-[#414141]">Indie Edition</div>
      <div className="absolute right-[19px] top-[24px] text-[46px] font-bold leading-[60px] text-[#4b4b4b]">Geometry</div>
      <svg width="1642" height="860" viewBox="10 822 1642 860" className="absolute left-0 top-0">
        <circle cx="769" cy="1437" r="58" fill="#44699b" />
        <circle cx="769" cy="1437" r="39.500" fill="#9373cc" />
        <g fill="none" stroke="#5582ba" strokeWidth="1.200">
          {WIRES.map((d) => (
            <path key={d} d={d} />
          ))}
        </g>
        {NODES.map((n) => (
          <NodeBody key={n.name} node={n} />
        ))}
        <g fill="none" stroke="#93ad6e" strokeWidth="1.200">
          {ACTIVE_WIRES.map((d) => (
            <path key={d} d={d} />
          ))}
        </g>
        <Dot x={286} y={1001} />
        <Dot x={137} y={1138} />
        <Dot x={384} y={1241} />
        <Dot x={431} y={1241} />
        <Dot x={408} y={1295} />
        <rect x="722" y="1403" width="94" height="12" rx="6" fill="#b4b4b4" />
      </svg>
      {NODES.map((n) => (
        <NodeLabel key={n.name} node={n} />
      ))}
    </div>
  );
}

function NetworkPane() {
  return (
    <section className="flex flex-1 flex-col">
      <TabBar>
        <Tab title="/obj/geo1" active className="w-[156px] italic" />
        <Tab title="Material Palette" className="w-[205px]" />
        <Tab title="/out" className="w-[113px] font-bold" />
      </TabBar>
      <header className="border-b border-black bg-gradient-to-b from-[#4a4a4a] to-[#393939] pb-[10px] pt-[9px]">
        <PathBar forward />
      </header>
      <MenuBar />
      <NetworkView />
    </section>
  );
}

function Gutter() {
  return (
    <div className="flex w-[10px] flex-col items-start gap-[37px] border-r border-[#303030] bg-[#484848] pl-px pt-[775px]">
      <svg width="6" height="12" viewBox="0 0 6 12">
        <path d="M6 0 V12 L0 6 Z" fill="#8a8a8a" />
      </svg>
      <div className="grid grid-cols-2 gap-px">
        {Array.from({ length: 28 }, (_, i) => (
          <span key={i} className="size-[2px] bg-[#707070]" />
        ))}
      </div>
      <svg width="6" height="12" viewBox="0 0 6 12">
        <path d="M0 0 V12 L6 6 Z" fill="#8a8a8a" />
      </svg>
    </div>
  );
}

export default function App() {
  return (
    <div className="flex min-h-screen bg-[#393939] font-['Noto_Sans_CJK_SC',sans-serif]">
      <Gutter />
      <main className="flex min-w-0 flex-1 flex-col">
        <div className="h-[3px] border-b border-black bg-[#484848]" />
        <ParameterPane />
        <Splitter />
        <NetworkPane />
      </main>
    </div>
  );
}
